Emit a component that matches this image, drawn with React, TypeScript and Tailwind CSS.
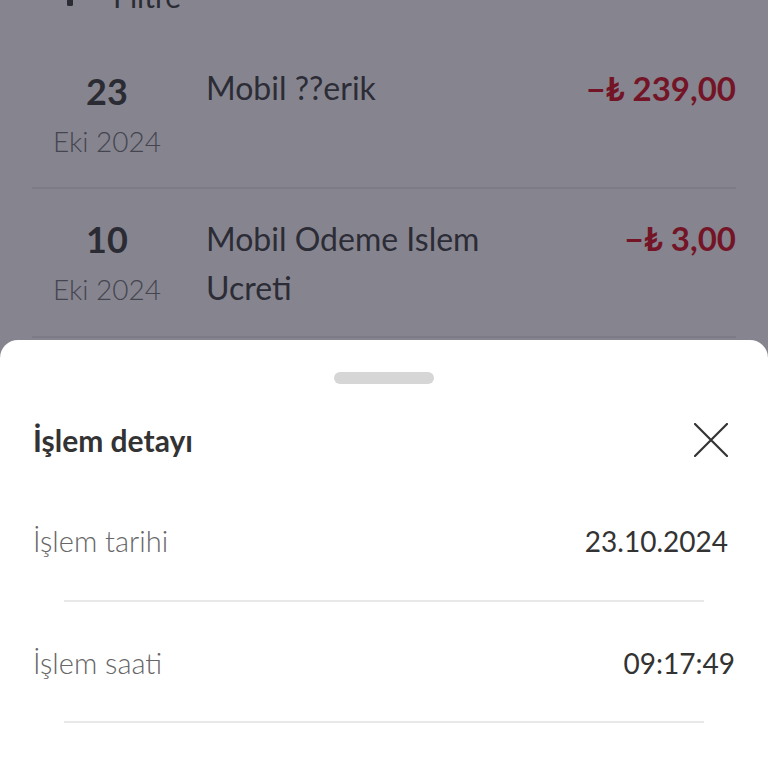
import { Fragment } from "react";

const txs = [
  { day: "23", month: "Eki 2024", title: ["Mobil ??erik"], amount: "−₺ 239,00" },
  { day: "10", month: "Eki 2024", title: ["Mobil Odeme Islem", "Ucreti"], amount: "−₺ 3,00" },
];

const details = [
  { label: "İşlem tarihi", value: "23.10.2024", pr: "pr-[40px]" },
  { label: "İşlem saati", value: "09:17:49", pr: "pr-[33px]" },
];

function CloseIcon() {
  return (
    <svg width="34" height="34" viewBox="0 0 34 34" fill="none" stroke="#333" strokeWidth="2.2" strokeLinecap="round">
      <path d="M1 1L33 33M33 1L1 33" />
    </svg>
  );
}

export default function App() {
  return (
    <div className="relative h-[768px] w-[768px] overflow-hidden bg-[#86858f] font-['Lato','Noto_Sans',sans-serif]">
      {/* transaction list behind the sheet */}
      <div className="px-8">
        <div className="-mt-6 flex h-10 items-center text-[30px] text-[#2c2c35]">
          <svg width="24" height="24" viewBox="0 0 24 24" className="ml-[26px]" fill="#2c2c35">
            <path d="M3 4h18l-7 8v0H10L3 4z" />
            <rect x="9" y="14" width="6" height="8" rx="1.5" />
          </svg>
          <span className="ml-[31px]">Filtre</span>
        </div>

        {txs.map((t, i) => (
          <Fragment key={t.day}>
            <div className={`grid grid-cols-[150px_1fr_auto] gap-x-6 ${i === 0 ? "mt-[50px]" : "pt-[25px]"}`}>
              <div className="flex flex-col items-center">
                <span className="text-[36px] font-bold leading-[50px] text-[#2b2b33]">{t.day}</span>
                <span className="text-[28px] font-light leading-[50px] text-[#45454f]">{t.month}</span>
              </div>
              <div className={`text-[32px] text-[#2c2c36] ${i === 0 ? "leading-[44px]" : "leading-[49px]"}`}>
                {t.title.map((l) => (
                  <div key={l}>{l}</div>
                ))}
              </div>
              <div className={`text-right text-[33px] font-bold text-[#731527] ${i === 0 ? "leading-[44px]" : "leading-[49px]"}`}>
                {t.amount}
              </div>
            </div>
            <div className={`h-[2px] bg-[#7c7b86] ${i === 0 ? "mt-[21px]" : "mt-[22px]"}`} />
          </Fragment>
        ))}
      </div>

      {/* bottom sheet */}
      <div className="absolute inset-x-0 top-[340px] bottom-0 flex flex-col rounded-t-[18px] bg-white">
        <div className="mx-auto mt-[32px] h-3 w-[100px] rounded-full bg-[#d6d6d6]" />

        <div className="mt-[28px] flex h-[56px] items-center justify-between pl-[33px] pr-[40px]">
          <span className="text-[30px] font-bold text-[#333333]">İşlem detayı</span>
          <CloseIcon />
        </div>

        {details.map((d, i) => (
          <Fragment key={d.label}>
            <div className={`flex h-[40px] items-center justify-between pl-[33px] ${d.pr} ${i === 0 ? "mt-[53px]" : "mt-[41px]"}`}>
              <span className="text-[29px] font-light text-[#666666]">{d.label}</span>
              <span className="text-[28px] text-[#333333]">{d.value}</span>
            </div>
            <div className={`mx-[64px] h-[2px] bg-[#e8e8e8] ${i === 0 ? "mt-[39px]" : "mt-[38px]"}`} />
          </Fragment>
        ))}
      </div>
    </div>
  );
}
